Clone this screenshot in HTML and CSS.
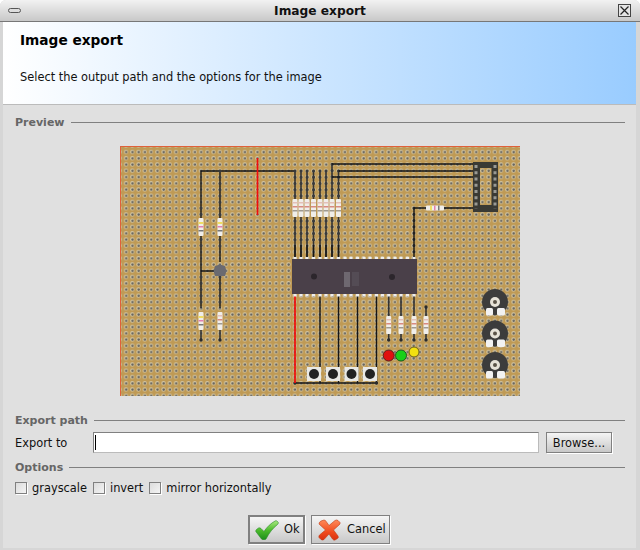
FILE: index.html
```html
<!DOCTYPE html>
<html lang="en">
<head>
<meta charset="utf-8">
<title>Image export</title>
<link rel="stylesheet" href="styles.css">
</head>
<body>
<div class="window">
  <div class="titlebar">
    <span class="pill"></span>
    <span class="title">Image export</span>
    <svg class="close" width="13" height="13" viewBox="0 0 13 13"><rect x="0.5" y="0.5" width="12" height="12" fill="#e4e4e4" stroke="#444"/><path d="M2.5 2.5L10.5 10.5M10.5 2.5L2.5 10.5" stroke="#222" stroke-width="1.2" fill="none"/></svg>
  </div>
  <div class="content">
    <header class="banner">
      <h1>Image export</h1>
      <p>Select the output path and the options for the image</p>
    </header>
    <main class="body">
      <div class="section preview-head"><span>Preview</span></div>
      <div class="board-wrap">
        <svg class="board" width="400" height="250" viewBox="120 146 400 250">
          <defs>
            <pattern id="holes" x="122.9" y="148.9" width="6.25" height="6.25" patternUnits="userSpaceOnUse">
              <circle cx="3.1" cy="3.1" r="2.1" fill="#d2c6a6"/>
              <circle cx="3.3" cy="3.2" r="1.2" fill="#66635c"/>
            </pattern>
            <g id="res">
              <rect x="-2.5" y="0" width="5" height="18" rx="1" fill="#f0eeea"/>
              <rect x="-2.5" y="3" width="5" height="1.5" fill="#e4c0b8"/>
              <rect x="-2.5" y="7" width="5" height="1.5" fill="#d88a80"/>
              <rect x="-2.5" y="11" width="5" height="1.5" fill="#a09a90"/>
            </g>
            <g id="res2">
              <rect x="-2.5" y="0" width="5" height="18" rx="1" fill="#f0eeea"/>
              <rect x="-2.5" y="4" width="5" height="2" fill="#eedd66"/>
              <rect x="-2.5" y="8" width="5" height="1.5" fill="#e080b0"/>
              <rect x="-2.5" y="12" width="5" height="1.5" fill="#777"/>
            </g>
            <g id="btn">
              <rect x="-7" y="-7" width="14" height="14" fill="#e9e9e6"/>
              <circle r="5" fill="#222"/>
            </g>
            <g id="pot">
              <circle r="13" fill="#3c3c3c"/>
              <circle r="5" fill="#e6e2d8"/>
              <circle r="2" fill="#5a5348"/>
              <rect x="-9" y="6" width="7" height="7.500" rx="1.500" fill="#f2f2f2"/>
              <rect x="2" y="6" width="8" height="7.500" rx="1.500" fill="#f2f2f2"/>
            </g>
          </defs>
          <rect x="120" y="146" width="400" height="250" fill="#bf9a55"/>
          <rect x="120" y="146" width="400" height="250" fill="url(#holes)"/>
          <path d="M120.5 396V146.500H520" fill="none" stroke="#e0603a"/>
          <g class="wire">
            <path d="M295 171H201V308M220 171V262M220 278V308M201 271H220"/>
            <path d="M295 171V259M301 171V259M307 171V259M313.500 171V259M320 171V259M326 171V259M332 164V259M338.500 171V259" class="wire-soft"/>
            <path d="M295 171V245M301 171V245M307 171V245M313.500 171V245M320 171V245M326 171V245M332 164.250V245M338.500 171V245M414 208V259M201 208V247M220 171V247M220 277V308M201 277V308" class="beads"/>
            <path d="M295 245V259M301 245V259M307 245V259M313.500 245V259M320 245V259M326 245V259M332 245V259M338.500 245V259"/>
            <path d="M332 164H473M338.500 171H473M332 177H473"/>
            <path d="M414 259V208H473"/>
            <path d="M320 294V383M338.500 294V383M357.500 294V383M376.500 294V383M295 383H376.500"/>
            <path d="M201 330V340M220 330V340M388.700 294V340M401 294V340M414 294V340M426 307V340" class="wire-soft"/>
            <path d="M201 340V340.100M220 340V340.100M388.700 340V340.100M401 340V340.100M414 340V340.100M426 340V340.100M426 307V307.100M295 383V383.100M376.500 383V383.100" class="node"/>
          </g>
          <path d="M257.500 158V215" class="wire-red"/>
          <path d="M295 294V383" class="wire-red"/>
          <use href="#res2" x="201" y="218"/>
          <use href="#res2" x="220" y="218"/>
          <use href="#res2" x="201" y="312"/>
          <use href="#res" x="220" y="312"/>
          <use href="#res" x="295" y="199"/>
          <use href="#res" x="301" y="199"/>
          <use href="#res" x="307" y="199"/>
          <use href="#res" x="313.500" y="199"/>
          <use href="#res" x="320" y="199"/>
          <use href="#res" x="326" y="199"/>
          <use href="#res" x="332" y="199"/>
          <use href="#res" x="338.500" y="199"/>
          <use href="#res" x="388.700" y="316"/>
          <use href="#res" x="401" y="316"/>
          <use href="#res" x="414" y="316"/>
          <use href="#res" x="426" y="316"/>
          <g transform="translate(426 208) rotate(-90)">
            <use href="#res2"/>
          </g>
          <path d="M220 264.500l5 1.500 1.500 5-1.500 5-10 0-1.500-5 1.500-5z" fill="#6a6a70"/>
          <g class="socket">
            <path fill-rule="evenodd" d="M473 162H498V212H473ZM480 168V205H491.500V168Z" fill="#3a3a34"/>
            <path d="M476 165V209M495 165V209" stroke="#9a9a94" stroke-width="3" stroke-dasharray="3 3.250" fill="none"/>
          </g>
          <rect x="292" y="259" width="125" height="35" fill="#4a4049"/>
          <path d="M295 259V257M301 259V257M307 259V257M313.500 259V257M320 259V257M326 259V257M332 259V257M338.500 259V257M345 259V257M351 259V257M357.500 259V257M364 259V257M370 259V257M376.500 259V257M382.500 259V257M388.700 259V257M395 259V257M401 259V257M407.500 259V257M414 259V257M295 294V296.500M301 294V296.500M307 294V296.500M313.500 294V296.500M320 294V296.500M326 294V296.500M332 294V296.500M338.500 294V296.500M345 294V296.500M351 294V296.500M357.500 294V296.500M364 294V296.500M370 294V296.500M376.500 294V296.500M382.500 294V296.500M388.700 294V296.500M395 294V296.500M401 294V296.500M407.500 294V296.500M414 294V296.500" stroke="#eee" stroke-width="3" fill="none"/>
          <circle cx="314" cy="276.500" r="3" fill="#2c262c"/>
          <circle cx="392" cy="277" r="3" fill="#2c262c"/>
          <rect x="344" y="272" width="6" height="15" fill="#6e6870"/>
          <rect x="352" y="272" width="7" height="14" fill="#544c55"/>
          <use href="#btn" x="314" y="374"/>
          <use href="#btn" x="333" y="374"/>
          <use href="#btn" x="351.500" y="374"/>
          <use href="#btn" x="370" y="374"/>
          <circle cx="388.700" cy="355.500" r="5.500" fill="#e01010" stroke="#5a2020"/>
          <circle cx="401" cy="355.500" r="5.500" fill="#18d018" stroke="#205a20"/>
          <circle cx="414" cy="352" r="5" fill="#f2e010" stroke="#6a6020"/>
          <use href="#pot" x="495" y="302"/>
          <use href="#pot" x="495" y="333.500"/>
          <use href="#pot" x="495" y="365"/>
        </svg>
      </div>
      <div class="section path-head"><span>Export path</span></div>
      <div class="path-row">
        <label class="path-label" for="path">Export to</label>
        <div class="path-input" id="path"><i class="caret"></i></div>
        <button class="browse" type="button">Browse...</button>
      </div>
      <div class="section options-head"><span>Options</span></div>
      <div class="options">
        <label class="option"><i class="check"></i>grayscale</label>
        <label class="option"><i class="check"></i>invert</label>
        <label class="option"><i class="check"></i>mirror horizontally</label>
      </div>
      <div class="actions">
        <button class="action ok" type="button">
          <svg width="24" height="20" viewBox="0 0 24 20"><defs><linearGradient id="g" x1="0" y1="0" x2="0" y2="1"><stop offset="0" stop-color="#a8e880"/><stop offset="0.5" stop-color="#4cbb2c"/><stop offset="1" stop-color="#1c8e1c"/></linearGradient></defs><path d="M0.800 11.500Q0.500 10.500 1.500 9.500L3.500 8Q5 7.500 6 8.500L9 11.500C12 7 16 3 20.500 0.800Q21.500 0.500 22.500 1.500L23.300 2.500Q23.500 3.500 22.500 4.500C18 8 14 13 11 19Q10.500 19.700 9 19.700L8 19.700Q7 19.700 6.500 19Z" fill="url(#g)" stroke="#2a8a2a" stroke-width="0.6"/></svg>
          <span>Ok</span>
        </button>
        <button class="action cancel" type="button">
          <svg width="23" height="22" viewBox="0 0 23 22"><defs><linearGradient id="r" x1="0" y1="0" x2="0" y2="1"><stop offset="0" stop-color="#ff8a5a"/><stop offset="0.6" stop-color="#f04a1c"/><stop offset="1" stop-color="#d83010"/></linearGradient></defs><path d="M1 5Q1 3 3 2L6 1Q7.500 1 8.500 3L11 6.500L17 1.500Q18.500 0.500 20 1.500L22 3.500Q22.500 5 21 6L15.500 11L20 17Q21 18.500 19.500 19.500L17 21Q15.500 21.500 14.500 20L11 15L6 20.500Q4.500 21.500 3 20.500L1 18.500Q0.500 17 1.500 16L7.500 11Z" fill="url(#r)" stroke="#c03a14" stroke-width="0.6"/></svg>
          <span>Cancel</span>
        </button>
      </div>
    </main>
  </div>
</div>
</body>
</html>
```
FILE: styles.css
```css
* { box-sizing: border-box; }
html, body { margin: 0; padding: 0; }
body {
  width: 640px;
  height: 550px;
  overflow: hidden;
  background: #fff;
  font-family: "DejaVu Sans", sans-serif;
  font-size: 11.4px;
  color: #111;
}
.window {
  width: 640px;
  height: 550px;
  display: flex;
  flex-direction: column;
  background: #d6d6d6;
  border-radius: 6px 6px 0 0;
  overflow: hidden;
}
.titlebar {
  height: 22px;
  flex: none;
  display: flex;
  align-items: center;
  justify-content: center;
  position: relative;
  background: linear-gradient(#f2f2f2, #c8c8c8);
  border-bottom: 1px solid #777;
}
.title { font-weight: bold; font-size: 12.2px; }
.pill {
  position: absolute;
  left: 8px;
  top: 8px;
  width: 13px;
  height: 5px;
  border-radius: 3px;
  background: #ddd;
  border: 1px solid #555;
}
.close { position: absolute; left: 618px; top: 4px; }
.content {
  flex: 1;
  display: flex;
  flex-direction: column;
  margin: 0 4px 2px 3px;
  background: #e0e0e0;
}
.banner {
  height: 83px;
  flex: none;
  padding: 9px 17px 0;
  background: linear-gradient(90deg, #fff, #99ccff);
  border-bottom: 1px solid #bbb;
}
.banner h1 { margin: 0; font-size: 13.7px; font-weight: bold; line-height: 18px; color: #000; }
.banner p { margin: 20px 0 0; line-height: 16px; }
.body { flex: 1; padding: 0 12px; display: flex; flex-direction: column; }
.section {
  display: flex;
  align-items: center;
  gap: 6px;
  height: 16px;
  font-size: 11px;
  font-weight: bold;
  color: #666;
  margin-right: -1px;
}
.section::after { content: ""; flex: 1; height: 1px; background: #808080; }
.preview-head { margin-top: 9px; }
.board-wrap { display: flex; justify-content: center; margin-top: 16px; }
.board { display: block; }
.path-head { margin-top: 16px; }
.path-row { display: flex; align-items: center; margin-top: 4px; height: 21px; }
.path-label { width: 78px; flex: none; }
.path-input {
  width: 446px;
  height: 21px;
  background: #fff;
  border: 1px solid #808080;
  border-right-color: #bbb;
  border-bottom-color: #bbb;
  padding: 2px 1px;
}
.caret { display: block; width: 1px; height: 15px; background: #000; }
.browse {
  margin-left: 7px;
  width: 66px;
  height: 21px;
  padding: 0;
  font: inherit;
  color: #111;
  background: linear-gradient(#f5f5f5, #c8c8c8);
  border: 1px solid #808080;
  box-shadow: 1px 1px 0 #fff;
}
.options-head { margin-top: 6px; }
.options { display: flex; gap: 6px; margin-top: 5px; height: 16px; align-items: center; }
.option { display: flex; align-items: center; gap: 5px; }
.check {
  width: 12px;
  height: 12px;
  border: 1px solid #808080;
  background: linear-gradient(135deg, #dcdcdc, #f4f4f4);
  box-shadow: 1px 1px 0 #fff;
}
.actions { display: flex; justify-content: center; gap: 6px; margin-top: 19px; padding-right: 1px; }
.action {
  height: 29px;
  display: flex;
  align-items: center;
  padding: 0;
  font: inherit;
  color: #111;
  background: linear-gradient(#f5f5f5, #c8c8c8);
  border: 1px solid #808080;
  box-shadow: 1px 1px 0 #fff;
}
.action span { padding-bottom: 1px; }
.ok { width: 57px; border-width: 2px; padding-left: 5px; gap: 5px; }
.cancel { width: 79px; padding-left: 6px; gap: 6px; }
.wire path { fill: none; stroke: #161616; stroke-width: 1.4; }
.wire .wire-soft { stroke: #333; stroke-width: 1.6; }
.wire .beads { stroke: #3a3a3a; stroke-width: 3; stroke-linecap: round; stroke-dasharray: 0 6.25; }
.wire .node { stroke: #2a2a2a; stroke-width: 3.4; stroke-linecap: round; }
.wire-red { fill: none; stroke: #f00c0c; stroke-width: 1.7; }
```
